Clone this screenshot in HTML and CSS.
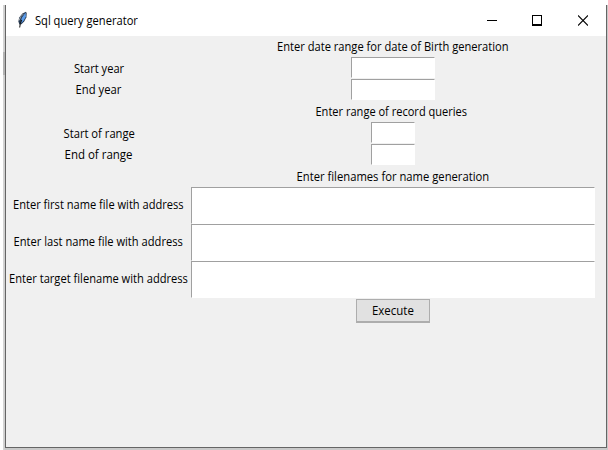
FILE: index.html
```html
<!DOCTYPE html>
<html lang="en">
<head>
<meta charset="utf-8">
<title>Sql query generator</title>
<link rel="stylesheet" href="styles.css">
</head>
<body>
<main class="window">
  <header class="titlebar">
    <svg class="feather" width="12" height="18" viewBox="0 0 12 18">
      <path d="M2.4 13.6 1.4 10.5 2.2 6.5 5.4 2.6 9 .8 9.7 2.2 9.4 6.3 7.2 10.6 4.4 13.2Z" fill="#26384f"/>
      <path d="M3.8 11 4.8 6.8 8.7 1.6 8.9 5.5 6.8 9.6 4.5 12Z" fill="#5b9ceb"/>
      <path d="M2.7 16.5 3.3 12.5 4.8 9" fill="none" stroke="#111"/>
      <path d="M2.2 9.4 3.6 5.8 6.6 2.8" fill="none" stroke="#a3a8ad"/>
    </svg>
    <span class="title"><span class="fit" data-width="103">Sql query generator</span></span>
    <div class="controls">
      <svg class="minimize" width="10" height="11" viewBox="0 0 10 11" shape-rendering="crispEdges"><path d="M0 5.5H10" stroke="#000"/></svg>
      <svg width="10" height="11" viewBox="0 0 10 11" shape-rendering="crispEdges"><path d="M.5 .5H9.5V10H.5ZM0 9.5H10" fill="none" stroke="#000"/></svg>
      <svg width="10" height="11" viewBox="0 0 10 11"><path d="M0 .5 10 10.5M10 .5 0 10.5" stroke="#000" stroke-width="1.1"/></svg>
    </div>
  </header>
  <form class="form">
    <h2 class="heading"><span class="fit" data-width="232">Enter date range for date of Birth generation</span></h2>
    <label for="sy" class="low"><span class="fit" data-width="50">Start year</span></label><input id="sy" class="year">
    <label for="ey"><span class="fit" data-width="46">End year</span></label><input id="ey" class="year">
    <h2 class="heading range-heading"><span class="fit" data-width="152">Enter range of record queries</span></h2>
    <label for="sr" class="low"><span class="fit" data-width="71">Start of range</span></label><input id="sr" class="range">
    <label for="er"><span class="fit" data-width="68">End of range</span></label><input id="er" class="range">
    <h2 class="heading"><span class="fit" data-width="193">Enter filenames for name generation</span></h2>
    <label for="fn" class="high"><span class="fit" data-width="171">Enter first name file with address</span></label><input id="fn" class="file">
    <label for="ln" class="high"><span class="fit" data-width="169">Enter last name file with address</span></label><input id="ln" class="file">
    <label for="tn" class="high"><span class="fit" data-width="179">Enter target filename with address</span></label><input id="tn" class="file">
    <button type="button" class="execute"><span class="fit" data-width="42">Execute</span></button>
  </form>
</main>
<script src="script.js"></script>
</body>
</html>
```
FILE: styles.css
```css
* { box-sizing: border-box; }
body {
  margin: 0;
  height: 450px;
  padding: 5px 1px 2px 5px;
  overflow: hidden;
  background:
    linear-gradient(#b4b4b4, #b4b4b4) 3px 52px / 2px 23px no-repeat,
    linear-gradient(to right, #fff 3px, #d6d6d6 3px, #cdcdcd 5px, #c9c9c9 5px);
  font: 12px/16px "Open Sans", sans-serif;
  color: #000;
  box-shadow: inset 0 5px #fff;
}
.window {
  width: 602px;
  height: 443px;
  border: 1px solid #656565;
  border-top: 0;
  background: #f0f0f0;
}
.titlebar {
  display: flex;
  align-items: center;
  height: 31px;
  padding: 0 18px 1px 11px;
  background: #fff;
}
.feather { margin-right: 6px; }
.title { padding-top: 1px; }
.controls { display: flex; gap: 36px; margin-left: auto; }
.controls svg { display: block; }
.controls .minimize { margin-right: -1px; }
.fit {
  display: inline-block;
  white-space: nowrap;
}
.form {
  display: grid;
  grid-template-columns: 185px 404px;
  grid-template-rows: 21px 22px 22px 21px 22px 22px 21px 37px 37px 37px 26px;
}
.form label {
  grid-column: 1;
  display: flex;
  align-items: center;
  justify-content: center;
}
.form .low { padding: 2px 0 0 1px; }
.form .high { padding-bottom: 1px; }
.heading {
  grid-column: 2;
  display: flex;
  align-items: center;
  justify-content: center;
  margin: 0;
  font: inherit;
}
.range-heading { padding-right: 4px; }
.form input {
  grid-column: 2;
  justify-self: center;
  height: 21px;
  padding: 0 2px;
  border: 1px solid #fff;
  border-top-color: #a0a0a0;
  border-left-color: #a0a0a0;
  border-radius: 0;
  outline: 0;
  background: #fff;
}
.form .year { width: 84px; }
.form .range { width: 44px; }
.form .file { width: 404px; height: 37px; }
.execute {
  grid-column: 2;
  justify-self: center;
  display: flex;
  align-items: center;
  justify-content: center;
  width: 74px;
  height: 24px;
  margin-top: 1px;
  padding: 0;
  border: 1px solid #adadad;
  border-bottom-width: 2px;
  background: #e1e1e1;
  color: #000;
  font: inherit;
}
```
FILE: script.js
```js
document.querySelectorAll('.fit').forEach(function (el) {
  el.style.transform = 'scaleX(' + el.dataset.width / el.offsetWidth + ')';
  if (el.parentNode.className === 'title') el.style.transformOrigin = 'left';
});
```
